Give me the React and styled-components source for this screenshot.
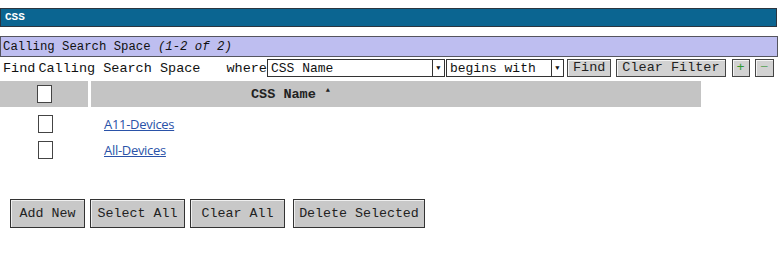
import styled, { createGlobalStyle } from "styled-components";

const GlobalStyle = createGlobalStyle`
  body {
    margin: 0;
    background: #ffffff;
    font-family: "Liberation Mono", "Courier New", monospace;
  }
`;

const Page = styled.div`
  width: 781px;
  padding-top: 8px;
`;

const TitleBar = styled.div`
  height: 17px;
  width: 771px;
  background: #0b6591;
  border: 1px solid #2b3540;
  color: #ffffff;
  font-weight: bold;
  font-size: 11px;
  line-height: 17px;
  padding-left: 4px;
`;

const SubHeader = styled.div`
  margin-top: 9px;
  width: 774px;
  height: 19px;
  background: #bebef0;
  border: 1px solid #55555f;
  font-size: 12.3px;
  line-height: 20px;
  padding-left: 2px;
  color: #111;
  em {
    font-style: italic;
  }
`;

const FindRow = styled.div`
  display: flex;
  align-items: center;
  height: 20px;
  margin-top: 1px;
  padding-left: 3px;
  font-size: 13.5px;
  color: #111;
`;

const Label = styled.span`
  margin-right: ${(p) => p.gap || 0}px;
  white-space: pre;
`;

const Select = styled.div`
  display: flex;
  align-items: center;
  width: ${(p) => p.width}px;
  height: 18px;
  border: 1px solid #333;
  background: #fff;
  margin-right: ${(p) => p.gap || 0}px;
  box-sizing: border-box;
  font-size: 13px;
`;

const SelectText = styled.span`
  flex: 1;
  padding-left: 3px;
`;

const SelectArrow = styled.span`
  width: 11px;
  height: 100%;
  border-left: 1px solid #333;
  display: flex;
  align-items: center;
  justify-content: center;
  font-size: 7px;
`;

const SmallButton = styled.button`
  height: 18px;
  padding: 0 ${(p) => p.pad ?? 5}px;
  min-width: ${(p) => p.min || 0}px;
  margin-right: ${(p) => p.gap || 0}px;
  background: #d2d2d2;
  border: 1px solid #444;
  box-shadow: inset 1px 1px 0 #f4f4f4;
  font-family: "Liberation Mono", "Courier New", monospace;
  font-size: 13.5px;
  color: ${(p) => p.color || "#222"};
  line-height: 16px;
`;

const Table = styled.div`
  margin-top: 3px;
  width: 701px;
`;

const HeaderRow = styled.div`
  display: flex;
  gap: 3px;
  height: 26px;
  margin-bottom: 4px;
`;

const HeaderCell = styled.div`
  background: #c4c4c4;
  display: flex;
  align-items: center;
  justify-content: ${(p) => (p.center ? "center" : "flex-start")};
  width: ${(p) => (p.width ? p.width + "px" : "auto")};
  flex: ${(p) => (p.width ? "none" : 1)};
  padding-left: ${(p) => p.pad || 0}px;
  font-size: 13.5px;
  font-weight: bold;
  color: #222;
`;

const Box = styled.span`
  display: inline-block;
  width: 13px;
  height: 16px;
  background: #fff;
  border: 1px solid #444;
`;

const Arrow = styled.span`
  font-size: 7px;
  margin-left: 10px;
  position: relative;
  top: -4px;
`;

const Row = styled.div`
  display: flex;
  align-items: center;
  height: 26px;
`;

const RowCheck = styled.div`
  width: 88px;
  display: flex;
  justify-content: center;
  padding-left: 1px;
`;

const RowLink = styled.a`
  margin-left: 15px;
  font-family: "Open Sans", "Liberation Sans", sans-serif;
  font-size: 13px;
  color: #2a52a8;
  text-decoration: underline;
  letter-spacing: -0.3px;
`;

const ButtonBar = styled.div`
  display: flex;
  gap: 5px;
  margin-top: 36px;
  padding-left: 10px;
`;

const BigButton = styled.button`
  height: 29px;
  width: ${(p) => p.width}px;
  margin-right: ${(p) => p.gap || 0}px;
  background: #c8c8c8;
  border: 1px solid #333;
  box-shadow: inset 1px 1px 0 #efefef;
  font-family: "Liberation Mono", "Courier New", monospace;
  font-size: 13.3px;
  color: #222;
  padding: 0;
`;

const rows = ["A11-Devices", "All-Devices"];

export default function App() {
  return (
    <Page>
      <GlobalStyle />
      <TitleBar>CSS</TitleBar>
      <SubHeader>
        Calling Search Space <em>(1-2 of 2)</em>
      </SubHeader>
      <FindRow>
        <Label gap={3}>Find</Label>
        <Label gap={26}>Calling Search Space</Label>
        <Label>where</Label>
        <Select width={178} gap={1}>
          <SelectText>CSS Name</SelectText>
          <SelectArrow>▼</SelectArrow>
        </Select>
        <Select width={118} gap={3}>
          <SelectText>begins with</SelectText>
          <SelectArrow>▼</SelectArrow>
        </Select>
        <SmallButton gap={5}>Find</SmallButton>
        <SmallButton gap={6}>Clear Filter</SmallButton>
        <SmallButton pad={0} min={18} gap={5} color="#2f9a2f">+</SmallButton>
        <SmallButton pad={0} min={19} color="#6aa86a">−</SmallButton>
      </FindRow>
      <Table>
        <HeaderRow>
          <HeaderCell width={88} center>
            <Box />
          </HeaderCell>
          <HeaderCell pad={160}>
            CSS Name<Arrow>▲</Arrow>
          </HeaderCell>
        </HeaderRow>
        {rows.map((name) => (
          <Row key={name}>
            <RowCheck>
              <Box />
            </RowCheck>
            <RowLink href="#">{name}</RowLink>
          </Row>
        ))}
      </Table>
      <ButtonBar>
        <BigButton width={75}>Add New</BigButton>
        <BigButton width={95}>Select All</BigButton>
        <BigButton width={95} gap={3}>Clear All</BigButton>
        <BigButton width={132}>Delete Selected</BigButton>
      </ButtonBar>
    </Page>
  );
}
